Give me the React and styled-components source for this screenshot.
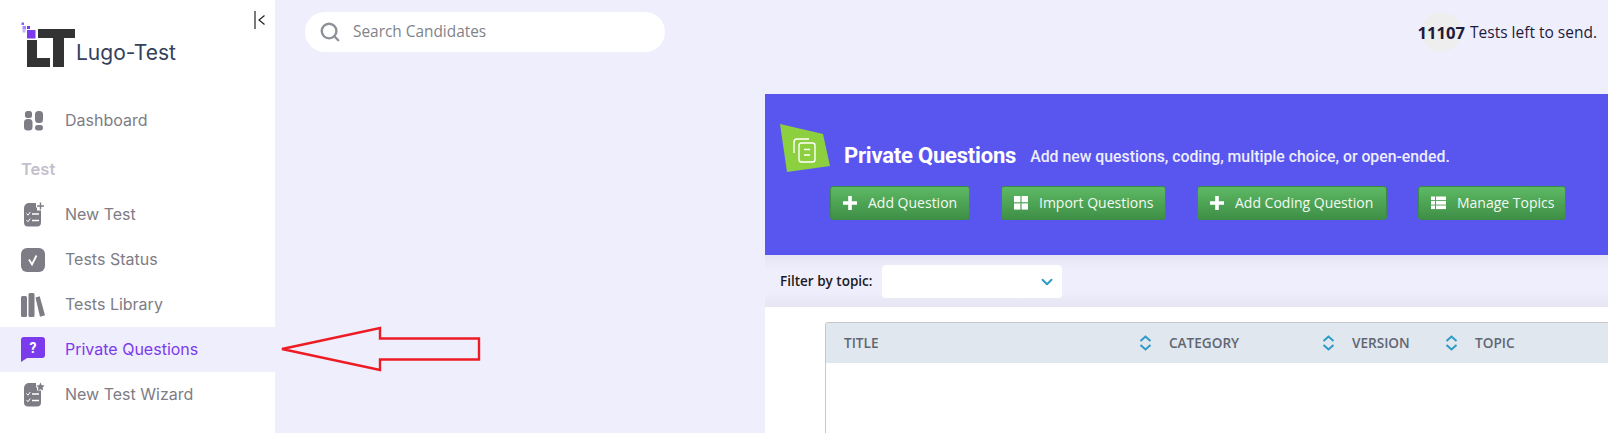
import React from 'react';
import styled, { createGlobalStyle } from 'styled-components';
import { Search, ChevronDown } from 'lucide-react';

const GlobalStyle = createGlobalStyle`
    html, body {
        margin: 0;
        padding: 0;
        background: #EFEEFC;
        overflow: hidden;
    }
`;

const Page = styled.div`
    position: relative;
    display: flex;
    width: 1608px;
    height: 433px;
    overflow: hidden;
    background: #EFEEFC;
`;

/* 사이드바 */
const Sidebar = styled.aside`
    position: relative;
    width: 275px;
    flex-shrink: 0;
    background: #fff;
    font-family: Inter, "Noto Sans", sans-serif;
`;

const CollapseIcon = styled.svg`
    position: absolute;
    top: 10px;
    left: 254px;
`;

const Brand = styled.div`
    height: 98px;
    padding: 20px 0 0 20px;
    box-sizing: border-box;
    display: flex;
    align-items: flex-start;

    svg {
        flex-shrink: 0;
    }

    span {
        margin: 20px 0 0 -2px;
        font-size: 21px;
        line-height: 26px;
        color: #33415C;
    }
`;

const NavItem = styled.div`
    height: 45px;
    display: flex;
    align-items: center;
    background: ${p => (p.$active ? '#EFEEFC' : 'transparent')};
    color: ${p => (p.$active ? '#7C3AED' : '#7E7C85')};
    font-size: 16px;

    .slot {
        width: 65px;
        padding-left: 21px;
        box-sizing: border-box;
        display: flex;
    }

    span {
        margin-bottom: 2px;
    }
`;

const NavLabel = styled.div`
    height: 49px;
    padding: 16px 0 0 21px;
    box-sizing: border-box;
    font-size: 16.5px;
    line-height: 20px;
    font-weight: 600;
    color: #C3BFCC;
`;

/* 본문 */
const Main = styled.main`
    flex: 1;
    min-width: 0;
`;

const TopBar = styled.header`
    height: 94px;
    padding: 12px 11px 0 30px;
    box-sizing: border-box;
    display: flex;
    justify-content: space-between;
    align-items: flex-start;
`;

const SearchBox = styled.div`
    width: 360px;
    height: 40px;
    border-radius: 20px;
    background: #fff;
    display: flex;
    align-items: center;
    padding-left: 14px;
    box-sizing: border-box;
    gap: 12px;
    font-family: "Open Sans", sans-serif;
    font-size: 15.4px;
    line-height: 38px;
    color: #7F8389;

    svg {
        color: #8E9198;
    }
`;

const Credits = styled.div`
    position: relative;
    height: 40px;
    display: flex;
    align-items: center;
    font-family: "Open Sans", sans-serif;
    font-size: 15.5px;
    color: #1E1B3A;

    b {
        font-size: 16.6px;
        font-weight: 700;
        margin-right: 5px;
    }

    &::before {
        content: '';
        position: absolute;
        left: 3px;
        top: 0;
        width: 40px;
        height: 40px;
        border-radius: 50%;
        background: #EEEEEE;
        z-index: 0;
    }

    b, span {
        position: relative;
        z-index: 1;
    }
`;

const Content = styled.section`
    margin-left: 490px;
`;

const Hero = styled.div`
    height: 161px;
    box-sizing: border-box;
    padding: 30px 0 0 15px;
    background: #5956EF;
    color: #fff;
    font-family: Roboto, sans-serif;
`;

const HeroHead = styled.div`
    display: flex;
    align-items: flex-start;
    height: 50px;

    svg {
        flex-shrink: 0;
        margin-right: 14px;
    }
`;

const HeroTitle = styled.h1`
    margin: 17px 14px 0 0;
    font-size: 22px;
    line-height: 30px;
    font-weight: 700;
    letter-spacing: -0.2px;
`;

const HeroText = styled.p`
    margin: 23px 0 0 0;
    font-size: 15.8px;
    line-height: 20px;
    font-weight: 500;
    color: #EDEDFD;
`;

const HeroActions = styled.div`
    display: flex;
    gap: 31px;
    margin: 12px 0 0 50px;
`;

const ActionButton = styled.button`
    height: 34px;
    width: ${p => p.$width}px;
    box-sizing: border-box;
    padding: 0 0 0 12px;
    display: flex;
    align-items: center;
    gap: 11px;
    border: 1px solid #3A8C45;
    border-radius: 3px;
    background: linear-gradient(to bottom, #5DB963, #3F8F47);
    color: #F2FAF2;
    font-family: "Open Sans", sans-serif;
    font-size: 14px;
    white-space: nowrap;

    span {
        margin-bottom: 2px;
    }
`;

const FilterBar = styled.div`
    height: 52px;
    box-sizing: border-box;
    padding: 10px 0 0 15px;
    display: flex;
    align-items: flex-start;
    background: linear-gradient(to bottom, #E6E5F4, #EFEEFC 30%, #EFEEFC 70%, #E6E5F4);
    font-family: "Open Sans", sans-serif;
`;

const FilterLabel = styled.label`
    width: 102px;
    font-size: 13.5px;
    line-height: 33px;
    font-weight: 600;
    color: #1b1b1f;
    white-space: nowrap;
`;

const Select = styled.div`
    width: 180px;
    height: 33px;
    border-radius: 4px;
    background: #fff;
    display: flex;
    align-items: center;
    justify-content: flex-end;
    padding-right: 6px;
    box-sizing: border-box;
    color: #2E9AC7;
`;

const TableArea = styled.div`
    height: 126px;
    background: #fff;
    padding: 15px 0 0 60px;
    box-sizing: border-box;
`;

const Table = styled.div`
    height: 111px;
    border-left: 1px solid #C8C8C8;
    border-top: 1px solid #C8C8C8;
    border-top-left-radius: 3px;
    box-sizing: border-box;
`;

const TableHead = styled.div`
    height: 40px;
    display: flex;
    padding-left: 7px;
    background: #E1E7EF;
    font-family: "Open Sans", sans-serif;
    font-size: 13.6px;
    font-weight: 600;
    color: #5F6672;
`;

const HeadCell = styled.div`
    width: ${p => p.$width}px;
    box-sizing: border-box;
    padding: 0 6px 0 11px;
    display: flex;
    align-items: center;
    justify-content: space-between;

    span {
        margin-bottom: 2px;
    }
`;

const ArrowMark = styled.svg`
    position: absolute;
    left: 275px;
    top: 320px;
`;

const SortIcon = () => (
    <svg width="13" height="16" viewBox="0 0 13 16" fill="none" stroke="#2E9AC7" strokeWidth="2">
        <path d="M1.5 6 L6.5 1.5 L11.5 6" />
        <path d="M1.5 10 L6.5 14.5 L11.5 10" />
    </svg>
);

const Logo = () => (
    <svg width="58" height="50" viewBox="0 0 58 50">
        <path d="M7 20 h10 v18 h13 v9 h-23 z" fill="#333333" />
        <path d="M18 9 h37 v9 h-11 v29 h-11 v-29 h-15 z" fill="#333333" />
        <rect x="7" y="10" width="8.5" height="8.5" fill="#7C3AED" />
        <rect x="2.5" y="6" width="3.5" height="3.5" fill="#A78BFA" />
        <rect x="7" y="6" width="3" height="3" fill="#7C3AED" />
        <rect x="1.5" y="2.5" width="2.5" height="2.5" fill="#8B5CF6" />
        <rect x="2.5" y="9.5" width="3" height="3" fill="#C4B5FD" />
    </svg>
);

const DashIcon = () => (
    <svg width="24" height="20" viewBox="-3 0 24 20" fill="#7E7C85">
        <rect x="1" y="0" width="7" height="7" rx="2.5" />
        <rect x="11" y="0" width="8" height="12" rx="3.5" />
        <rect x="0" y="8" width="8.5" height="11.5" rx="3.5" />
        <rect x="11" y="14" width="8" height="5.5" rx="2.7" />
    </svg>
);

const SheetIcon = ({ mark }) => (
    <svg width="24" height="25" viewBox="0 0 24 25">
        <path d="M8 1 h7 v4.5 h1 v3 h4 v12 a4 4 0 0 1 -4 4 h-9 a4 4 0 0 1 -4 -4 v-14.5 a5 5 0 0 1 5 -5 z" fill="#7E7C85" />
        {mark === 'plus' && <path d="M19.5 0.5 v7 M16 4 h7" stroke="#7E7C85" strokeWidth="1.4" />}
        {mark === 'star' && <path d="M19.5 0.5 l1.3 2.7 3 .4 -2.2 2 .6 3 -2.7 -1.4 -2.7 1.4 .6 -3 -2.2 -2 3 -.4 z" fill="#7E7C85" />}
        <path d="M5.5 11.5 l1.5 1.7 2.3 -3.2 M5.5 18 l1.5 1.7 2.3 -3.2" fill="none" stroke="#fff" strokeWidth="1" />
        <path d="M11 12 h7 M11 18.5 h7" stroke="#fff" strokeWidth="1.3" />
    </svg>
);

const StatusIcon = () => (
    <svg width="24" height="24" viewBox="0 0 24 24">
        <rect width="24" height="24" rx="6" fill="#7E7C85" />
        <path d="M8 11.5 l3 5 l4.5 -9" fill="none" stroke="#fff" strokeWidth="1.8" />
    </svg>
);

const LibraryIcon = () => (
    <svg width="24" height="24" viewBox="0 0 24 24" fill="#7E7C85">
        <rect x="0" y="3" width="6" height="21" rx="1.5" />
        <rect x="7.5" y="0" width="6" height="24" rx="1.5" />
        <path d="M14.5 4.5 l4.2 -1.2 5.3 19 -5 1.5 z" />
    </svg>
);

const QuestionIcon = () => (
    <svg width="24" height="25" viewBox="0 0 24 25">
        <path d="M3 0 h18 a3 3 0 0 1 3 3 v15 a3 3 0 0 1 -3 3 h-15 l-6 4 v-22 a3 3 0 0 1 3 -3 z" fill="#7C3AED" />
        <text x="12" y="16" textAnchor="middle" fontFamily="Roboto, sans-serif" fontWeight="700" fontSize="14" fill="#fff">?</text>
    </svg>
);

const PlusIcon = () => (
    <svg width="14" height="14" viewBox="0 0 14 14" fill="#fff">
        <path d="M5.2 0 h3.6 v5.2 h5.2 v3.6 h-5.2 v5.2 h-3.6 v-5.2 h-5.2 v-3.6 h5.2 z" />
    </svg>
);

const GridIcon = () => (
    <svg width="14" height="14" viewBox="0 0 14 14" fill="#fff">
        <rect width="6.4" height="6.2" />
        <rect x="7.6" width="6.4" height="6.2" />
        <rect y="7.4" width="6.4" height="6.2" />
        <rect x="7.6" y="7.4" width="6.4" height="6.2" />
    </svg>
);

const ListIcon = () => (
    <svg width="15" height="14" viewBox="0 0 15 14" fill="#fff">
        <rect width="4" height="3.6" y="0.5" />
        <rect x="5" width="10" height="3.6" y="0.5" />
        <rect width="4" height="3.6" y="5" />
        <rect x="5" width="10" height="3.6" y="5" />
        <rect width="4" height="3.6" y="9.5" />
        <rect x="5" width="10" height="3.6" y="9.5" />
    </svg>
);

const App = () => {
    return (
        <Page>
            <GlobalStyle />
            <Sidebar>
                <CollapseIcon width="12" height="20" viewBox="0 0 12 20" fill="none" stroke="#222">
                    <path d="M1 1 V19" strokeWidth="1.2" />
                    <path d="M10.5 5.5 L5 10 L10.5 14.5" strokeWidth="1.2" />
                </CollapseIcon>
                <Brand>
                    <Logo />
                    <span>Lugo-Test</span>
                </Brand>
                <NavItem><div className="slot"><DashIcon /></div><span>Dashboard</span></NavItem>
                <NavLabel>Test</NavLabel>
                <NavItem><div className="slot"><SheetIcon mark="plus" /></div><span>New Test</span></NavItem>
                <NavItem><div className="slot"><StatusIcon /></div><span>Tests Status</span></NavItem>
                <NavItem><div className="slot"><LibraryIcon /></div><span>Tests Library</span></NavItem>
                <NavItem $active><div className="slot"><QuestionIcon /></div><span>Private Questions</span></NavItem>
                <NavItem><div className="slot"><SheetIcon mark="star" /></div><span>New Test Wizard</span></NavItem>
            </Sidebar>
            <Main>
                <TopBar>
                    <SearchBox>
                        <Search size={22} strokeWidth={2.6} />
                        Search Candidates
                    </SearchBox>
                    <Credits><b>11107</b><span>Tests left to send.</span></Credits>
                </TopBar>
                <Content>
                    <Hero>
                        <HeroHead>
                            <svg width="50" height="48" viewBox="0 0 50 48">
                                <polygon points="0,0 43,10 50,42 7,48" fill="#8CD03F" />
                                <path d="M14 29 V18 a3 3 0 0 1 3 -3 H29" fill="none" stroke="#fff" strokeWidth="1.4" />
                                <rect x="19" y="19" width="16" height="19" rx="2.5" fill="none" stroke="#fff" strokeWidth="1.4" />
                                <path d="M24 25.5 h6 M24 31 h6" stroke="#fff" strokeWidth="1.4" />
                            </svg>
                            <HeroTitle>Private Questions</HeroTitle>
                            <HeroText>Add new questions, coding, multiple choice, or open-ended.</HeroText>
                        </HeroHead>
                        <HeroActions>
                            <ActionButton $width={140}><PlusIcon /><span>Add Question</span></ActionButton>
                            <ActionButton $width={165}><GridIcon /><span>Import Questions</span></ActionButton>
                            <ActionButton $width={190}><PlusIcon /><span>Add Coding Question</span></ActionButton>
                            <ActionButton $width={148}><ListIcon /><span>Manage Topics</span></ActionButton>
                        </HeroActions>
                    </Hero>
                    <FilterBar>
                        <FilterLabel>Filter by topic:</FilterLabel>
                        <Select><ChevronDown size={18} strokeWidth={2.6} /></Select>
                    </FilterBar>
                    <TableArea>
                        <Table>
                            <TableHead>
                                <HeadCell $width={325}><span>TITLE</span><SortIcon /></HeadCell>
                                <HeadCell $width={183}><span>CATEGORY</span><SortIcon /></HeadCell>
                                <HeadCell $width={123}><span>VERSION</span><SortIcon /></HeadCell>
                                <HeadCell $width={120}><span>TOPIC</span></HeadCell>
                            </TableHead>
                        </Table>
                    </TableArea>
                </Content>
            </Main>
            <ArrowMark width="210" height="56" viewBox="0 0 210 56" fill="none">
                <polygon points="7,29 105,8 105,18.5 204,18.5 204,39.5 105,39.5 105,50" stroke="#ED1C24" strokeWidth="2.4" fill="#EFEEFC" />
            </ArrowMark>
        </Page>
    );
};

export default App;
